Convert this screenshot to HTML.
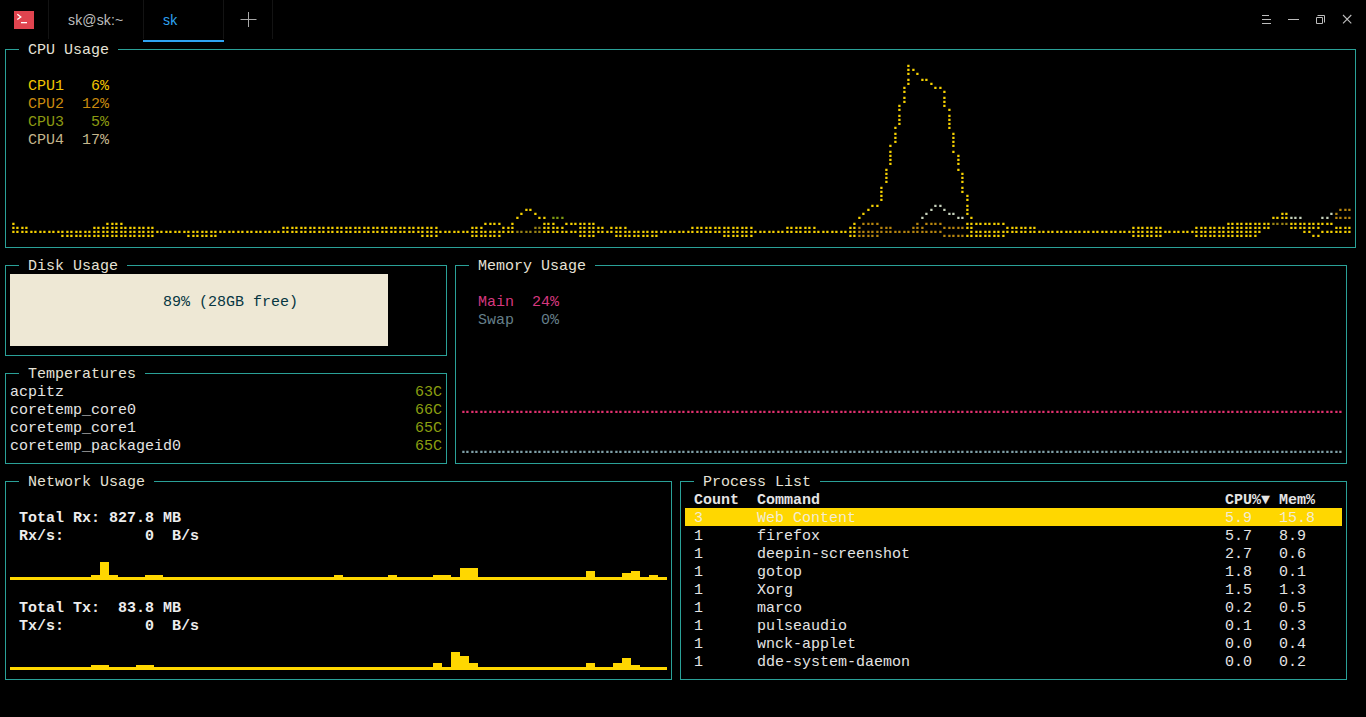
<!DOCTYPE html>
<html><head><meta charset="utf-8"><style>
html,body{margin:0;padding:0;background:#000;}
body{width:1366px;height:717px;overflow:hidden;position:relative;}
.l{position:absolute;background:#2aa198;}
.t{position:absolute;white-space:pre;font-family:"Liberation Mono",monospace;font-size:15px;line-height:18px;height:18px;}
.b{font-weight:bold;}
.s{position:absolute;background:#ffd700;}
.g{position:absolute;left:0;top:0;}
.sep{position:absolute;top:0;width:1px;height:39px;background:#131313;}
.tab{position:absolute;top:10px;font-family:"Liberation Sans",sans-serif;font-size:14px;letter-spacing:0.15px;line-height:20px;white-space:pre;}
</style></head><body>

<div style="position:absolute;left:14px;top:11px;width:20px;height:18px;background:#e0444f"></div>
<svg style="position:absolute;left:0;top:0" width="60" height="40"><path d="M17.3 14.3 L20.8 16.9 L17.3 19.5" stroke="#fff" stroke-width="1.3" fill="none"/><rect x="21" y="22" width="6" height="1.3" fill="#fff"/></svg>
<div class="sep" style="left:48px"></div>
<div class="sep" style="left:143px"></div>
<div class="sep" style="left:223px"></div>
<div class="sep" style="left:272px"></div>
<div class="tab" style="left:68px;color:#bdbdbd">sk@sk:~</div>
<div class="tab" style="left:163px;color:#2ea3f2">sk</div>
<div style="position:absolute;left:143px;top:40px;width:81px;height:2px;background:#2ea3f2"></div>
<svg style="position:absolute;left:0;top:0" width="1366" height="40">
<path d="M240.5 19.5 H256.5 M248.5 12 V27" stroke="#a8a8a8" stroke-width="1" fill="none"/>
<path d="M1262 15.5 H1269 M1262 19.5 H1271 M1262 23.5 H1271" stroke="#bcbcbc" stroke-width="1" fill="none"/>
<path d="M1288 19.5 H1299" stroke="#bcbcbc" stroke-width="1" fill="none"/>
<path d="M1316.5 17.5 H1322.5 V23.5 H1316.5 Z M1317.5 15.5 H1324.5 V22.5" stroke="#bcbcbc" stroke-width="1" fill="none"/>
<path d="M1343 15 L1351.3 23.3 M1351.3 15 L1343 23.3" stroke="#bcbcbc" stroke-width="1.1" fill="none"/>
</svg>

<div class="l" style="left:5px;top:49px;width:1px;height:199px"></div><div class="l" style="left:1355px;top:49px;width:1px;height:199px"></div><div class="l" style="left:5px;top:247px;width:1351px;height:1px"></div><div class="l" style="left:5px;top:49px;width:14px;height:1px"></div><div class="l" style="left:118px;top:49px;width:1238px;height:1px"></div><div class="t" style="left:28px;top:42px;color:#e6e2d6">CPU Usage</div><div class="l" style="left:5px;top:265px;width:1px;height:91px"></div><div class="l" style="left:446px;top:265px;width:1px;height:91px"></div><div class="l" style="left:5px;top:355px;width:442px;height:1px"></div><div class="l" style="left:5px;top:265px;width:14px;height:1px"></div><div class="l" style="left:127px;top:265px;width:320px;height:1px"></div><div class="t" style="left:28px;top:258px;color:#e6e2d6">Disk Usage</div><div class="l" style="left:5px;top:373px;width:1px;height:91px"></div><div class="l" style="left:446px;top:373px;width:1px;height:91px"></div><div class="l" style="left:5px;top:463px;width:442px;height:1px"></div><div class="l" style="left:5px;top:373px;width:14px;height:1px"></div><div class="l" style="left:145px;top:373px;width:302px;height:1px"></div><div class="t" style="left:28px;top:366px;color:#e6e2d6">Temperatures</div><div class="l" style="left:455px;top:265px;width:1px;height:199px"></div><div class="l" style="left:1346px;top:265px;width:1px;height:199px"></div><div class="l" style="left:455px;top:463px;width:892px;height:1px"></div><div class="l" style="left:455px;top:265px;width:14px;height:1px"></div><div class="l" style="left:595px;top:265px;width:752px;height:1px"></div><div class="t" style="left:478px;top:258px;color:#e6e2d6">Memory Usage</div><div class="l" style="left:5px;top:481px;width:1px;height:199px"></div><div class="l" style="left:671px;top:481px;width:1px;height:199px"></div><div class="l" style="left:5px;top:679px;width:667px;height:1px"></div><div class="l" style="left:5px;top:481px;width:14px;height:1px"></div><div class="l" style="left:154px;top:481px;width:518px;height:1px"></div><div class="t" style="left:28px;top:474px;color:#e6e2d6">Network Usage</div><div class="l" style="left:680px;top:481px;width:1px;height:199px"></div><div class="l" style="left:1346px;top:481px;width:1px;height:199px"></div><div class="l" style="left:680px;top:679px;width:667px;height:1px"></div><div class="l" style="left:680px;top:481px;width:14px;height:1px"></div><div class="l" style="left:820px;top:481px;width:527px;height:1px"></div><div class="t" style="left:703px;top:474px;color:#e6e2d6">Process List</div><div class="t" style="left:28px;top:78px;color:#f2c500">CPU1   6%</div><div class="t" style="left:28px;top:96px;color:#c98a0e">CPU2  12%</div><div class="t" style="left:28px;top:114px;color:#8c9a12">CPU3   5%</div><div class="t" style="left:28px;top:132px;color:#c4b68c">CPU4  17%</div><div style="position:absolute;left:10px;top:274px;width:378px;height:72px;background:#eee8d5"></div><div class="t" style="left:163px;top:294px;color:#073642">89% (28GB free)</div><div class="t" style="left:10px;top:384px;color:#e4e4e4">acpitz</div><div class="t" style="left:415px;top:384px;color:#8a9e10">63C</div><div class="t" style="left:10px;top:402px;color:#e4e4e4">coretemp_core0</div><div class="t" style="left:415px;top:402px;color:#8a9e10">66C</div><div class="t" style="left:10px;top:420px;color:#e4e4e4">coretemp_core1</div><div class="t" style="left:415px;top:420px;color:#8a9e10">65C</div><div class="t" style="left:10px;top:438px;color:#e4e4e4">coretemp_packageid0</div><div class="t" style="left:415px;top:438px;color:#8a9e10">65C</div><div class="t" style="left:478px;top:294px;color:#d6387f">Main  24%</div><div class="t" style="left:478px;top:312px;color:#657f89">Swap   0%</div><div class="t b" style="left:19px;top:510px;color:#ededed">Total Rx: 827.8 MB</div><div class="t b" style="left:19px;top:528px;color:#ededed">Rx/s:         0  B/s</div><div class="t b" style="left:19px;top:600px;color:#ededed">Total Tx:  83.8 MB</div><div class="t b" style="left:19px;top:618px;color:#ededed">Tx/s:         0  B/s</div><div class="s" style="left:10px;top:577px;width:9px;height:3px"></div><div class="s" style="left:19px;top:577px;width:9px;height:3px"></div><div class="s" style="left:28px;top:577px;width:9px;height:3px"></div><div class="s" style="left:37px;top:577px;width:9px;height:3px"></div><div class="s" style="left:46px;top:577px;width:9px;height:3px"></div><div class="s" style="left:55px;top:577px;width:9px;height:3px"></div><div class="s" style="left:64px;top:577px;width:9px;height:3px"></div><div class="s" style="left:73px;top:577px;width:9px;height:3px"></div><div class="s" style="left:82px;top:577px;width:9px;height:3px"></div><div class="s" style="left:91px;top:575px;width:9px;height:5px"></div><div class="s" style="left:100px;top:562px;width:9px;height:18px"></div><div class="s" style="left:109px;top:575px;width:9px;height:5px"></div><div class="s" style="left:118px;top:577px;width:9px;height:3px"></div><div class="s" style="left:127px;top:577px;width:9px;height:3px"></div><div class="s" style="left:136px;top:577px;width:9px;height:3px"></div><div class="s" style="left:145px;top:575px;width:9px;height:5px"></div><div class="s" style="left:154px;top:575px;width:9px;height:5px"></div><div class="s" style="left:163px;top:577px;width:9px;height:3px"></div><div class="s" style="left:172px;top:577px;width:9px;height:3px"></div><div class="s" style="left:181px;top:577px;width:9px;height:3px"></div><div class="s" style="left:190px;top:577px;width:9px;height:3px"></div><div class="s" style="left:199px;top:577px;width:9px;height:3px"></div><div class="s" style="left:208px;top:577px;width:9px;height:3px"></div><div class="s" style="left:217px;top:577px;width:9px;height:3px"></div><div class="s" style="left:226px;top:577px;width:9px;height:3px"></div><div class="s" style="left:235px;top:577px;width:9px;height:3px"></div><div class="s" style="left:244px;top:577px;width:9px;height:3px"></div><div class="s" style="left:253px;top:577px;width:9px;height:3px"></div><div class="s" style="left:262px;top:577px;width:9px;height:3px"></div><div class="s" style="left:271px;top:577px;width:9px;height:3px"></div><div class="s" style="left:280px;top:577px;width:9px;height:3px"></div><div class="s" style="left:289px;top:577px;width:9px;height:3px"></div><div class="s" style="left:298px;top:577px;width:9px;height:3px"></div><div class="s" style="left:307px;top:577px;width:9px;height:3px"></div><div class="s" style="left:316px;top:577px;width:9px;height:3px"></div><div class="s" style="left:325px;top:577px;width:9px;height:3px"></div><div class="s" style="left:334px;top:575px;width:9px;height:5px"></div><div class="s" style="left:343px;top:577px;width:9px;height:3px"></div><div class="s" style="left:352px;top:577px;width:9px;height:3px"></div><div class="s" style="left:361px;top:577px;width:9px;height:3px"></div><div class="s" style="left:370px;top:577px;width:9px;height:3px"></div><div class="s" style="left:379px;top:577px;width:9px;height:3px"></div><div class="s" style="left:388px;top:575px;width:9px;height:5px"></div><div class="s" style="left:397px;top:577px;width:9px;height:3px"></div><div class="s" style="left:406px;top:577px;width:9px;height:3px"></div><div class="s" style="left:415px;top:577px;width:9px;height:3px"></div><div class="s" style="left:424px;top:577px;width:9px;height:3px"></div><div class="s" style="left:433px;top:575px;width:9px;height:5px"></div><div class="s" style="left:442px;top:575px;width:9px;height:5px"></div><div class="s" style="left:451px;top:577px;width:9px;height:3px"></div><div class="s" style="left:460px;top:568px;width:9px;height:12px"></div><div class="s" style="left:469px;top:568px;width:9px;height:12px"></div><div class="s" style="left:478px;top:577px;width:9px;height:3px"></div><div class="s" style="left:487px;top:577px;width:9px;height:3px"></div><div class="s" style="left:496px;top:577px;width:9px;height:3px"></div><div class="s" style="left:505px;top:577px;width:9px;height:3px"></div><div class="s" style="left:514px;top:577px;width:9px;height:3px"></div><div class="s" style="left:523px;top:577px;width:9px;height:3px"></div><div class="s" style="left:532px;top:577px;width:9px;height:3px"></div><div class="s" style="left:541px;top:577px;width:9px;height:3px"></div><div class="s" style="left:550px;top:577px;width:9px;height:3px"></div><div class="s" style="left:559px;top:577px;width:9px;height:3px"></div><div class="s" style="left:568px;top:577px;width:9px;height:3px"></div><div class="s" style="left:577px;top:577px;width:9px;height:3px"></div><div class="s" style="left:586px;top:571px;width:9px;height:9px"></div><div class="s" style="left:595px;top:577px;width:9px;height:3px"></div><div class="s" style="left:604px;top:577px;width:9px;height:3px"></div><div class="s" style="left:613px;top:577px;width:9px;height:3px"></div><div class="s" style="left:622px;top:573px;width:9px;height:7px"></div><div class="s" style="left:631px;top:571px;width:9px;height:9px"></div><div class="s" style="left:640px;top:577px;width:9px;height:3px"></div><div class="s" style="left:649px;top:575px;width:9px;height:5px"></div><div class="s" style="left:658px;top:577px;width:9px;height:3px"></div><div class="s" style="left:10px;top:667px;width:9px;height:3px"></div><div class="s" style="left:19px;top:667px;width:9px;height:3px"></div><div class="s" style="left:28px;top:667px;width:9px;height:3px"></div><div class="s" style="left:37px;top:667px;width:9px;height:3px"></div><div class="s" style="left:46px;top:667px;width:9px;height:3px"></div><div class="s" style="left:55px;top:667px;width:9px;height:3px"></div><div class="s" style="left:64px;top:667px;width:9px;height:3px"></div><div class="s" style="left:73px;top:667px;width:9px;height:3px"></div><div class="s" style="left:82px;top:667px;width:9px;height:3px"></div><div class="s" style="left:91px;top:665px;width:9px;height:5px"></div><div class="s" style="left:100px;top:665px;width:9px;height:5px"></div><div class="s" style="left:109px;top:667px;width:9px;height:3px"></div><div class="s" style="left:118px;top:667px;width:9px;height:3px"></div><div class="s" style="left:127px;top:667px;width:9px;height:3px"></div><div class="s" style="left:136px;top:665px;width:9px;height:5px"></div><div class="s" style="left:145px;top:665px;width:9px;height:5px"></div><div class="s" style="left:154px;top:667px;width:9px;height:3px"></div><div class="s" style="left:163px;top:667px;width:9px;height:3px"></div><div class="s" style="left:172px;top:667px;width:9px;height:3px"></div><div class="s" style="left:181px;top:667px;width:9px;height:3px"></div><div class="s" style="left:190px;top:667px;width:9px;height:3px"></div><div class="s" style="left:199px;top:667px;width:9px;height:3px"></div><div class="s" style="left:208px;top:667px;width:9px;height:3px"></div><div class="s" style="left:217px;top:667px;width:9px;height:3px"></div><div class="s" style="left:226px;top:667px;width:9px;height:3px"></div><div class="s" style="left:235px;top:667px;width:9px;height:3px"></div><div class="s" style="left:244px;top:667px;width:9px;height:3px"></div><div class="s" style="left:253px;top:667px;width:9px;height:3px"></div><div class="s" style="left:262px;top:667px;width:9px;height:3px"></div><div class="s" style="left:271px;top:667px;width:9px;height:3px"></div><div class="s" style="left:280px;top:667px;width:9px;height:3px"></div><div class="s" style="left:289px;top:667px;width:9px;height:3px"></div><div class="s" style="left:298px;top:667px;width:9px;height:3px"></div><div class="s" style="left:307px;top:667px;width:9px;height:3px"></div><div class="s" style="left:316px;top:667px;width:9px;height:3px"></div><div class="s" style="left:325px;top:667px;width:9px;height:3px"></div><div class="s" style="left:334px;top:667px;width:9px;height:3px"></div><div class="s" style="left:343px;top:667px;width:9px;height:3px"></div><div class="s" style="left:352px;top:667px;width:9px;height:3px"></div><div class="s" style="left:361px;top:667px;width:9px;height:3px"></div><div class="s" style="left:370px;top:667px;width:9px;height:3px"></div><div class="s" style="left:379px;top:667px;width:9px;height:3px"></div><div class="s" style="left:388px;top:667px;width:9px;height:3px"></div><div class="s" style="left:397px;top:667px;width:9px;height:3px"></div><div class="s" style="left:406px;top:667px;width:9px;height:3px"></div><div class="s" style="left:415px;top:667px;width:9px;height:3px"></div><div class="s" style="left:424px;top:667px;width:9px;height:3px"></div><div class="s" style="left:433px;top:663px;width:9px;height:7px"></div><div class="s" style="left:442px;top:667px;width:9px;height:3px"></div><div class="s" style="left:451px;top:652px;width:9px;height:18px"></div><div class="s" style="left:460px;top:656px;width:9px;height:14px"></div><div class="s" style="left:469px;top:663px;width:9px;height:7px"></div><div class="s" style="left:478px;top:667px;width:9px;height:3px"></div><div class="s" style="left:487px;top:667px;width:9px;height:3px"></div><div class="s" style="left:496px;top:667px;width:9px;height:3px"></div><div class="s" style="left:505px;top:667px;width:9px;height:3px"></div><div class="s" style="left:514px;top:667px;width:9px;height:3px"></div><div class="s" style="left:523px;top:667px;width:9px;height:3px"></div><div class="s" style="left:532px;top:667px;width:9px;height:3px"></div><div class="s" style="left:541px;top:667px;width:9px;height:3px"></div><div class="s" style="left:550px;top:667px;width:9px;height:3px"></div><div class="s" style="left:559px;top:667px;width:9px;height:3px"></div><div class="s" style="left:568px;top:667px;width:9px;height:3px"></div><div class="s" style="left:577px;top:667px;width:9px;height:3px"></div><div class="s" style="left:586px;top:663px;width:9px;height:7px"></div><div class="s" style="left:595px;top:667px;width:9px;height:3px"></div><div class="s" style="left:604px;top:667px;width:9px;height:3px"></div><div class="s" style="left:613px;top:663px;width:9px;height:7px"></div><div class="s" style="left:622px;top:658px;width:9px;height:12px"></div><div class="s" style="left:631px;top:665px;width:9px;height:5px"></div><div class="s" style="left:640px;top:667px;width:9px;height:3px"></div><div class="s" style="left:649px;top:667px;width:9px;height:3px"></div><div class="s" style="left:658px;top:667px;width:9px;height:3px"></div><div style="position:absolute;left:685px;top:508px;width:657px;height:18px;background:#ffd700"></div><div class="t b" style="left:694px;top:492px;color:#e4e4e4">Count</div><div class="t b" style="left:757px;top:492px;color:#e4e4e4">Command</div><div class="t b" style="left:1225px;top:492px;color:#e4e4e4">CPU%▼</div><div class="t b" style="left:1279px;top:492px;color:#e4e4e4">Mem%</div><div class="t" style="left:694px;top:510px;color:#f3ecd2">3</div><div class="t" style="left:757px;top:510px;color:#f3ecd2">Web Content</div><div class="t" style="left:1225px;top:510px;color:#f3ecd2">5.9</div><div class="t" style="left:1279px;top:510px;color:#f3ecd2">15.8</div><div class="t" style="left:694px;top:528px;color:#e4e4e4">1</div><div class="t" style="left:757px;top:528px;color:#e4e4e4">firefox</div><div class="t" style="left:1225px;top:528px;color:#e4e4e4">5.7</div><div class="t" style="left:1279px;top:528px;color:#e4e4e4">8.9</div><div class="t" style="left:694px;top:546px;color:#e4e4e4">1</div><div class="t" style="left:757px;top:546px;color:#e4e4e4">deepin-screenshot</div><div class="t" style="left:1225px;top:546px;color:#e4e4e4">2.7</div><div class="t" style="left:1279px;top:546px;color:#e4e4e4">0.6</div><div class="t" style="left:694px;top:564px;color:#e4e4e4">1</div><div class="t" style="left:757px;top:564px;color:#e4e4e4">gotop</div><div class="t" style="left:1225px;top:564px;color:#e4e4e4">1.8</div><div class="t" style="left:1279px;top:564px;color:#e4e4e4">0.1</div><div class="t" style="left:694px;top:582px;color:#e4e4e4">1</div><div class="t" style="left:757px;top:582px;color:#e4e4e4">Xorg</div><div class="t" style="left:1225px;top:582px;color:#e4e4e4">1.5</div><div class="t" style="left:1279px;top:582px;color:#e4e4e4">1.3</div><div class="t" style="left:694px;top:600px;color:#e4e4e4">1</div><div class="t" style="left:757px;top:600px;color:#e4e4e4">marco</div><div class="t" style="left:1225px;top:600px;color:#e4e4e4">0.2</div><div class="t" style="left:1279px;top:600px;color:#e4e4e4">0.5</div><div class="t" style="left:694px;top:618px;color:#e4e4e4">1</div><div class="t" style="left:757px;top:618px;color:#e4e4e4">pulseaudio</div><div class="t" style="left:1225px;top:618px;color:#e4e4e4">0.1</div><div class="t" style="left:1279px;top:618px;color:#e4e4e4">0.3</div><div class="t" style="left:694px;top:636px;color:#e4e4e4">1</div><div class="t" style="left:757px;top:636px;color:#e4e4e4">wnck-applet</div><div class="t" style="left:1225px;top:636px;color:#e4e4e4">0.0</div><div class="t" style="left:1279px;top:636px;color:#e4e4e4">0.4</div><div class="t" style="left:694px;top:654px;color:#e4e4e4">1</div><div class="t" style="left:757px;top:654px;color:#e4e4e4">dde-system-daemon</div><div class="t" style="left:1225px;top:654px;color:#e4e4e4">0.0</div><div class="t" style="left:1279px;top:654px;color:#e4e4e4">0.2</div><svg class="g" width="1366" height="717" viewBox="0 0 1366 717"><path fill="#f5d000" d="M12.25 222.65h2.3v2.3h-2.3zM12.25 226.75h2.3v2.3h-2.3zM12.25 230.75h2.3v2.3h-2.3zM16.25 226.75h2.3v2.3h-2.3zM16.25 230.75h2.3v2.3h-2.3zM21.25 226.75h2.3v2.3h-2.3zM21.25 230.75h2.3v2.3h-2.3zM25.25 226.75h2.3v2.3h-2.3zM25.25 230.75h2.3v2.3h-2.3zM30.25 230.75h2.3v2.3h-2.3zM34.25 230.75h2.3v2.3h-2.3zM39.25 230.75h2.3v2.3h-2.3zM43.25 230.75h2.3v2.3h-2.3zM48.25 230.75h2.3v2.3h-2.3zM52.25 230.75h2.3v2.3h-2.3zM57.25 230.75h2.3v2.3h-2.3zM61.25 230.75h2.3v2.3h-2.3zM61.25 234.75h2.3v2.3h-2.3zM66.25 230.75h2.3v2.3h-2.3zM66.25 234.75h2.3v2.3h-2.3zM70.25 230.75h2.3v2.3h-2.3zM70.25 234.75h2.3v2.3h-2.3zM75.25 230.75h2.3v2.3h-2.3zM75.25 234.75h2.3v2.3h-2.3zM79.25 230.75h2.3v2.3h-2.3zM79.25 234.75h2.3v2.3h-2.3zM84.25 230.75h2.3v2.3h-2.3zM84.25 234.75h2.3v2.3h-2.3zM88.25 230.75h2.3v2.3h-2.3zM88.25 234.75h2.3v2.3h-2.3zM93.25 226.75h2.3v2.3h-2.3zM93.25 230.75h2.3v2.3h-2.3zM93.25 234.75h2.3v2.3h-2.3zM97.25 226.75h2.3v2.3h-2.3zM97.25 230.75h2.3v2.3h-2.3zM97.25 234.75h2.3v2.3h-2.3zM102.25 226.75h2.3v2.3h-2.3zM102.25 230.75h2.3v2.3h-2.3zM102.25 234.75h2.3v2.3h-2.3zM106.25 222.65h2.3v2.3h-2.3zM106.25 226.75h2.3v2.3h-2.3zM106.25 230.75h2.3v2.3h-2.3zM106.25 234.75h2.3v2.3h-2.3zM111.25 222.65h2.3v2.3h-2.3zM111.25 226.75h2.3v2.3h-2.3zM111.25 230.75h2.3v2.3h-2.3zM111.25 234.75h2.3v2.3h-2.3zM115.25 222.65h2.3v2.3h-2.3zM115.25 226.75h2.3v2.3h-2.3zM115.25 230.75h2.3v2.3h-2.3zM115.25 234.75h2.3v2.3h-2.3zM120.25 222.65h2.3v2.3h-2.3zM120.25 226.75h2.3v2.3h-2.3zM120.25 230.75h2.3v2.3h-2.3zM120.25 234.75h2.3v2.3h-2.3zM124.25 226.75h2.3v2.3h-2.3zM124.25 230.75h2.3v2.3h-2.3zM124.25 234.75h2.3v2.3h-2.3zM129.25 226.75h2.3v2.3h-2.3zM129.25 230.75h2.3v2.3h-2.3zM129.25 234.75h2.3v2.3h-2.3zM133.25 226.75h2.3v2.3h-2.3zM133.25 230.75h2.3v2.3h-2.3zM133.25 234.75h2.3v2.3h-2.3zM138.25 226.75h2.3v2.3h-2.3zM138.25 230.75h2.3v2.3h-2.3zM138.25 234.75h2.3v2.3h-2.3zM142.25 226.75h2.3v2.3h-2.3zM142.25 230.75h2.3v2.3h-2.3zM142.25 234.75h2.3v2.3h-2.3zM147.25 226.75h2.3v2.3h-2.3zM147.25 230.75h2.3v2.3h-2.3zM147.25 234.75h2.3v2.3h-2.3zM151.25 226.75h2.3v2.3h-2.3zM151.25 230.75h2.3v2.3h-2.3zM151.25 234.75h2.3v2.3h-2.3zM156.25 230.75h2.3v2.3h-2.3zM160.25 230.75h2.3v2.3h-2.3zM165.25 230.75h2.3v2.3h-2.3zM169.25 230.75h2.3v2.3h-2.3zM174.25 230.75h2.3v2.3h-2.3zM178.25 230.75h2.3v2.3h-2.3zM183.25 230.75h2.3v2.3h-2.3zM187.25 230.75h2.3v2.3h-2.3zM187.25 234.75h2.3v2.3h-2.3zM192.25 230.75h2.3v2.3h-2.3zM192.25 234.75h2.3v2.3h-2.3zM196.25 230.75h2.3v2.3h-2.3zM196.25 234.75h2.3v2.3h-2.3zM201.25 230.75h2.3v2.3h-2.3zM201.25 234.75h2.3v2.3h-2.3zM205.25 230.75h2.3v2.3h-2.3zM205.25 234.75h2.3v2.3h-2.3zM210.25 230.75h2.3v2.3h-2.3zM210.25 234.75h2.3v2.3h-2.3zM214.25 230.75h2.3v2.3h-2.3zM214.25 234.75h2.3v2.3h-2.3zM219.25 230.75h2.3v2.3h-2.3zM223.25 230.75h2.3v2.3h-2.3zM228.25 230.75h2.3v2.3h-2.3zM232.25 230.75h2.3v2.3h-2.3zM237.25 230.75h2.3v2.3h-2.3zM241.25 230.75h2.3v2.3h-2.3zM246.25 230.75h2.3v2.3h-2.3zM250.25 230.75h2.3v2.3h-2.3zM255.25 230.75h2.3v2.3h-2.3zM259.25 230.75h2.3v2.3h-2.3zM264.25 230.75h2.3v2.3h-2.3zM268.25 230.75h2.3v2.3h-2.3zM273.25 230.75h2.3v2.3h-2.3zM277.25 230.75h2.3v2.3h-2.3zM282.25 226.75h2.3v2.3h-2.3zM282.25 230.75h2.3v2.3h-2.3zM286.25 226.75h2.3v2.3h-2.3zM286.25 230.75h2.3v2.3h-2.3zM291.25 226.75h2.3v2.3h-2.3zM291.25 230.75h2.3v2.3h-2.3zM295.25 226.75h2.3v2.3h-2.3zM295.25 230.75h2.3v2.3h-2.3zM300.25 226.75h2.3v2.3h-2.3zM300.25 230.75h2.3v2.3h-2.3zM304.25 226.75h2.3v2.3h-2.3zM304.25 230.75h2.3v2.3h-2.3zM309.25 226.75h2.3v2.3h-2.3zM309.25 230.75h2.3v2.3h-2.3zM313.25 226.75h2.3v2.3h-2.3zM313.25 230.75h2.3v2.3h-2.3zM318.25 226.75h2.3v2.3h-2.3zM318.25 230.75h2.3v2.3h-2.3zM322.25 226.75h2.3v2.3h-2.3zM322.25 230.75h2.3v2.3h-2.3zM327.25 226.75h2.3v2.3h-2.3zM327.25 230.75h2.3v2.3h-2.3zM331.25 226.75h2.3v2.3h-2.3zM331.25 230.75h2.3v2.3h-2.3zM336.25 226.75h2.3v2.3h-2.3zM336.25 230.75h2.3v2.3h-2.3zM340.25 226.75h2.3v2.3h-2.3zM340.25 230.75h2.3v2.3h-2.3zM345.25 226.75h2.3v2.3h-2.3zM345.25 230.75h2.3v2.3h-2.3zM349.25 226.75h2.3v2.3h-2.3zM349.25 230.75h2.3v2.3h-2.3zM354.25 226.75h2.3v2.3h-2.3zM354.25 230.75h2.3v2.3h-2.3zM358.25 226.75h2.3v2.3h-2.3zM358.25 230.75h2.3v2.3h-2.3zM363.25 226.75h2.3v2.3h-2.3zM363.25 230.75h2.3v2.3h-2.3zM367.25 226.75h2.3v2.3h-2.3zM367.25 230.75h2.3v2.3h-2.3zM372.25 226.75h2.3v2.3h-2.3zM372.25 230.75h2.3v2.3h-2.3zM376.25 226.75h2.3v2.3h-2.3zM376.25 230.75h2.3v2.3h-2.3zM381.25 226.75h2.3v2.3h-2.3zM381.25 230.75h2.3v2.3h-2.3zM385.25 226.75h2.3v2.3h-2.3zM385.25 230.75h2.3v2.3h-2.3zM390.25 226.75h2.3v2.3h-2.3zM390.25 230.75h2.3v2.3h-2.3zM394.25 226.75h2.3v2.3h-2.3zM394.25 230.75h2.3v2.3h-2.3zM399.25 226.75h2.3v2.3h-2.3zM399.25 230.75h2.3v2.3h-2.3zM403.25 226.75h2.3v2.3h-2.3zM403.25 230.75h2.3v2.3h-2.3zM408.25 226.75h2.3v2.3h-2.3zM408.25 230.75h2.3v2.3h-2.3zM412.25 226.75h2.3v2.3h-2.3zM412.25 230.75h2.3v2.3h-2.3zM417.25 226.75h2.3v2.3h-2.3zM417.25 230.75h2.3v2.3h-2.3zM421.25 226.75h2.3v2.3h-2.3zM421.25 230.75h2.3v2.3h-2.3zM421.25 234.75h2.3v2.3h-2.3zM426.25 226.75h2.3v2.3h-2.3zM426.25 230.75h2.3v2.3h-2.3zM426.25 234.75h2.3v2.3h-2.3zM430.25 226.75h2.3v2.3h-2.3zM430.25 230.75h2.3v2.3h-2.3zM430.25 234.75h2.3v2.3h-2.3zM435.25 226.75h2.3v2.3h-2.3zM435.25 230.75h2.3v2.3h-2.3zM435.25 234.75h2.3v2.3h-2.3zM439.25 230.75h2.3v2.3h-2.3zM444.25 230.75h2.3v2.3h-2.3zM448.25 230.75h2.3v2.3h-2.3zM453.25 230.75h2.3v2.3h-2.3zM457.25 230.75h2.3v2.3h-2.3zM462.25 230.75h2.3v2.3h-2.3zM466.25 230.75h2.3v2.3h-2.3zM471.25 226.75h2.3v2.3h-2.3zM471.25 230.75h2.3v2.3h-2.3zM471.25 234.75h2.3v2.3h-2.3zM475.25 226.75h2.3v2.3h-2.3zM475.25 230.75h2.3v2.3h-2.3zM475.25 234.75h2.3v2.3h-2.3zM480.25 226.75h2.3v2.3h-2.3zM480.25 230.75h2.3v2.3h-2.3zM480.25 234.75h2.3v2.3h-2.3zM484.25 222.65h2.3v2.3h-2.3zM484.25 230.75h2.3v2.3h-2.3zM484.25 234.75h2.3v2.3h-2.3zM489.25 222.65h2.3v2.3h-2.3zM489.25 230.75h2.3v2.3h-2.3zM489.25 234.75h2.3v2.3h-2.3zM493.25 222.65h2.3v2.3h-2.3zM493.25 230.75h2.3v2.3h-2.3zM493.25 234.75h2.3v2.3h-2.3zM498.25 222.65h2.3v2.3h-2.3zM498.25 230.75h2.3v2.3h-2.3zM498.25 234.75h2.3v2.3h-2.3zM502.25 226.75h2.3v2.3h-2.3zM502.25 230.75h2.3v2.3h-2.3zM507.25 226.75h2.3v2.3h-2.3zM507.25 230.75h2.3v2.3h-2.3zM511.25 222.65h2.3v2.3h-2.3zM511.25 226.75h2.3v2.3h-2.3zM511.25 230.75h2.3v2.3h-2.3zM516.25 216.75h2.3v2.3h-2.3zM520.25 212.75h2.3v2.3h-2.3zM525.25 208.75h2.3v2.3h-2.3zM529.25 208.75h2.3v2.3h-2.3zM534.25 212.75h2.3v2.3h-2.3zM538.25 216.75h2.3v2.3h-2.3zM543.25 216.75h2.3v2.3h-2.3zM543.25 222.65h2.3v2.3h-2.3zM543.25 226.75h2.3v2.3h-2.3zM543.25 230.75h2.3v2.3h-2.3zM547.25 222.65h2.3v2.3h-2.3zM547.25 226.75h2.3v2.3h-2.3zM547.25 230.75h2.3v2.3h-2.3zM552.25 222.65h2.3v2.3h-2.3zM552.25 226.75h2.3v2.3h-2.3zM552.25 230.75h2.3v2.3h-2.3zM556.25 226.75h2.3v2.3h-2.3zM556.25 230.75h2.3v2.3h-2.3zM561.25 226.75h2.3v2.3h-2.3zM561.25 230.75h2.3v2.3h-2.3zM565.25 222.65h2.3v2.3h-2.3zM565.25 230.75h2.3v2.3h-2.3zM570.25 222.65h2.3v2.3h-2.3zM570.25 230.75h2.3v2.3h-2.3zM574.25 222.65h2.3v2.3h-2.3zM574.25 230.75h2.3v2.3h-2.3zM579.25 222.65h2.3v2.3h-2.3zM579.25 226.75h2.3v2.3h-2.3zM579.25 230.75h2.3v2.3h-2.3zM579.25 234.75h2.3v2.3h-2.3zM583.25 222.65h2.3v2.3h-2.3zM583.25 226.75h2.3v2.3h-2.3zM583.25 230.75h2.3v2.3h-2.3zM583.25 234.75h2.3v2.3h-2.3zM588.25 222.65h2.3v2.3h-2.3zM588.25 226.75h2.3v2.3h-2.3zM588.25 230.75h2.3v2.3h-2.3zM588.25 234.75h2.3v2.3h-2.3zM592.25 222.65h2.3v2.3h-2.3zM592.25 226.75h2.3v2.3h-2.3zM592.25 230.75h2.3v2.3h-2.3zM592.25 234.75h2.3v2.3h-2.3zM597.25 226.75h2.3v2.3h-2.3zM597.25 230.75h2.3v2.3h-2.3zM601.25 226.75h2.3v2.3h-2.3zM601.25 230.75h2.3v2.3h-2.3zM606.25 230.75h2.3v2.3h-2.3zM610.25 226.75h2.3v2.3h-2.3zM610.25 230.75h2.3v2.3h-2.3zM615.25 226.75h2.3v2.3h-2.3zM615.25 230.75h2.3v2.3h-2.3zM615.25 234.75h2.3v2.3h-2.3zM619.25 226.75h2.3v2.3h-2.3zM619.25 230.75h2.3v2.3h-2.3zM619.25 234.75h2.3v2.3h-2.3zM624.25 226.75h2.3v2.3h-2.3zM624.25 230.75h2.3v2.3h-2.3zM624.25 234.75h2.3v2.3h-2.3zM628.25 230.75h2.3v2.3h-2.3zM628.25 234.75h2.3v2.3h-2.3zM633.25 230.75h2.3v2.3h-2.3zM633.25 234.75h2.3v2.3h-2.3zM637.25 230.75h2.3v2.3h-2.3zM637.25 234.75h2.3v2.3h-2.3zM642.25 230.75h2.3v2.3h-2.3zM642.25 234.75h2.3v2.3h-2.3zM646.25 230.75h2.3v2.3h-2.3zM646.25 234.75h2.3v2.3h-2.3zM651.25 230.75h2.3v2.3h-2.3zM651.25 234.75h2.3v2.3h-2.3zM655.25 230.75h2.3v2.3h-2.3zM655.25 234.75h2.3v2.3h-2.3zM660.25 230.75h2.3v2.3h-2.3zM664.25 230.75h2.3v2.3h-2.3zM669.25 230.75h2.3v2.3h-2.3zM673.25 230.75h2.3v2.3h-2.3zM678.25 230.75h2.3v2.3h-2.3zM682.25 230.75h2.3v2.3h-2.3zM687.25 230.75h2.3v2.3h-2.3zM691.25 226.75h2.3v2.3h-2.3zM691.25 230.75h2.3v2.3h-2.3zM696.25 226.75h2.3v2.3h-2.3zM696.25 230.75h2.3v2.3h-2.3zM700.25 226.75h2.3v2.3h-2.3zM700.25 230.75h2.3v2.3h-2.3zM705.25 226.75h2.3v2.3h-2.3zM705.25 230.75h2.3v2.3h-2.3zM709.25 226.75h2.3v2.3h-2.3zM709.25 230.75h2.3v2.3h-2.3zM714.25 226.75h2.3v2.3h-2.3zM714.25 230.75h2.3v2.3h-2.3zM718.25 226.75h2.3v2.3h-2.3zM718.25 230.75h2.3v2.3h-2.3zM723.25 226.75h2.3v2.3h-2.3zM723.25 230.75h2.3v2.3h-2.3zM723.25 234.75h2.3v2.3h-2.3zM727.25 226.75h2.3v2.3h-2.3zM727.25 230.75h2.3v2.3h-2.3zM727.25 234.75h2.3v2.3h-2.3zM732.25 226.75h2.3v2.3h-2.3zM732.25 230.75h2.3v2.3h-2.3zM732.25 234.75h2.3v2.3h-2.3zM736.25 226.75h2.3v2.3h-2.3zM736.25 230.75h2.3v2.3h-2.3zM736.25 234.75h2.3v2.3h-2.3zM741.25 226.75h2.3v2.3h-2.3zM741.25 230.75h2.3v2.3h-2.3zM741.25 234.75h2.3v2.3h-2.3zM745.25 226.75h2.3v2.3h-2.3zM745.25 230.75h2.3v2.3h-2.3zM745.25 234.75h2.3v2.3h-2.3zM750.25 226.75h2.3v2.3h-2.3zM750.25 230.75h2.3v2.3h-2.3zM750.25 234.75h2.3v2.3h-2.3zM754.25 230.75h2.3v2.3h-2.3zM759.25 230.75h2.3v2.3h-2.3zM763.25 230.75h2.3v2.3h-2.3zM768.25 230.75h2.3v2.3h-2.3zM772.25 230.75h2.3v2.3h-2.3zM777.25 230.75h2.3v2.3h-2.3zM781.25 230.75h2.3v2.3h-2.3zM786.25 226.75h2.3v2.3h-2.3zM786.25 230.75h2.3v2.3h-2.3zM790.25 226.75h2.3v2.3h-2.3zM790.25 230.75h2.3v2.3h-2.3zM795.25 226.75h2.3v2.3h-2.3zM795.25 230.75h2.3v2.3h-2.3zM799.25 226.75h2.3v2.3h-2.3zM799.25 230.75h2.3v2.3h-2.3zM804.25 226.75h2.3v2.3h-2.3zM804.25 230.75h2.3v2.3h-2.3zM808.25 226.75h2.3v2.3h-2.3zM808.25 230.75h2.3v2.3h-2.3zM813.25 226.75h2.3v2.3h-2.3zM813.25 230.75h2.3v2.3h-2.3zM817.25 230.75h2.3v2.3h-2.3zM822.25 230.75h2.3v2.3h-2.3zM826.25 230.75h2.3v2.3h-2.3zM831.25 230.75h2.3v2.3h-2.3zM835.25 230.75h2.3v2.3h-2.3zM840.25 230.75h2.3v2.3h-2.3zM844.25 230.75h2.3v2.3h-2.3zM849.25 226.75h2.3v2.3h-2.3zM849.25 230.75h2.3v2.3h-2.3zM849.25 234.75h2.3v2.3h-2.3zM853.25 222.65h2.3v2.3h-2.3zM853.25 226.75h2.3v2.3h-2.3zM853.25 230.75h2.3v2.3h-2.3zM853.25 234.75h2.3v2.3h-2.3zM858.25 216.75h2.3v2.3h-2.3zM862.25 212.75h2.3v2.3h-2.3zM867.25 208.75h2.3v2.3h-2.3zM871.25 204.65h2.3v2.3h-2.3zM876.25 204.65h2.3v2.3h-2.3zM880.25 186.65h2.3v2.3h-2.3zM880.25 190.75h2.3v2.3h-2.3zM880.25 194.75h2.3v2.3h-2.3zM880.25 198.75h2.3v2.3h-2.3zM885.25 168.65h2.3v2.3h-2.3zM885.25 172.75h2.3v2.3h-2.3zM885.25 176.75h2.3v2.3h-2.3zM885.25 180.75h2.3v2.3h-2.3zM889.25 144.75h2.3v2.3h-2.3zM889.25 150.65h2.3v2.3h-2.3zM889.25 154.75h2.3v2.3h-2.3zM889.25 158.75h2.3v2.3h-2.3zM889.25 162.75h2.3v2.3h-2.3zM894.25 126.75h2.3v2.3h-2.3zM894.25 132.65h2.3v2.3h-2.3zM894.25 136.75h2.3v2.3h-2.3zM894.25 140.75h2.3v2.3h-2.3zM898.25 104.75h2.3v2.3h-2.3zM898.25 108.75h2.3v2.3h-2.3zM898.25 114.65h2.3v2.3h-2.3zM898.25 118.75h2.3v2.3h-2.3zM898.25 122.75h2.3v2.3h-2.3zM903.25 86.75h2.3v2.3h-2.3zM903.25 90.75h2.3v2.3h-2.3zM903.25 96.65h2.3v2.3h-2.3zM903.25 100.75h2.3v2.3h-2.3zM907.25 64.75h2.3v2.3h-2.3zM907.25 68.75h2.3v2.3h-2.3zM907.25 72.75h2.3v2.3h-2.3zM907.25 78.65h2.3v2.3h-2.3zM907.25 82.75h2.3v2.3h-2.3zM912.25 68.75h2.3v2.3h-2.3zM916.25 72.75h2.3v2.3h-2.3zM921.25 78.65h2.3v2.3h-2.3zM925.25 78.65h2.3v2.3h-2.3zM930.25 82.75h2.3v2.3h-2.3zM934.25 86.75h2.3v2.3h-2.3zM939.25 86.75h2.3v2.3h-2.3zM943.25 90.75h2.3v2.3h-2.3zM943.25 96.65h2.3v2.3h-2.3zM943.25 100.75h2.3v2.3h-2.3zM943.25 104.75h2.3v2.3h-2.3zM948.25 108.75h2.3v2.3h-2.3zM948.25 114.65h2.3v2.3h-2.3zM948.25 118.75h2.3v2.3h-2.3zM948.25 122.75h2.3v2.3h-2.3zM948.25 126.75h2.3v2.3h-2.3zM952.25 132.65h2.3v2.3h-2.3zM952.25 136.75h2.3v2.3h-2.3zM952.25 140.75h2.3v2.3h-2.3zM952.25 144.75h2.3v2.3h-2.3zM952.25 150.65h2.3v2.3h-2.3zM957.25 154.75h2.3v2.3h-2.3zM957.25 158.75h2.3v2.3h-2.3zM957.25 162.75h2.3v2.3h-2.3zM957.25 168.65h2.3v2.3h-2.3zM961.25 172.75h2.3v2.3h-2.3zM961.25 176.75h2.3v2.3h-2.3zM961.25 180.75h2.3v2.3h-2.3zM961.25 186.65h2.3v2.3h-2.3zM961.25 190.75h2.3v2.3h-2.3zM966.25 194.75h2.3v2.3h-2.3zM966.25 198.75h2.3v2.3h-2.3zM966.25 204.65h2.3v2.3h-2.3zM966.25 208.75h2.3v2.3h-2.3zM966.25 212.75h2.3v2.3h-2.3zM966.25 222.65h2.3v2.3h-2.3zM966.25 226.75h2.3v2.3h-2.3zM966.25 234.75h2.3v2.3h-2.3zM970.25 216.75h2.3v2.3h-2.3zM970.25 222.65h2.3v2.3h-2.3zM970.25 226.75h2.3v2.3h-2.3zM970.25 230.75h2.3v2.3h-2.3zM970.25 234.75h2.3v2.3h-2.3zM975.25 222.65h2.3v2.3h-2.3zM975.25 230.75h2.3v2.3h-2.3zM975.25 234.75h2.3v2.3h-2.3zM979.25 222.65h2.3v2.3h-2.3zM979.25 230.75h2.3v2.3h-2.3zM979.25 234.75h2.3v2.3h-2.3zM984.25 222.65h2.3v2.3h-2.3zM984.25 230.75h2.3v2.3h-2.3zM984.25 234.75h2.3v2.3h-2.3zM988.25 222.65h2.3v2.3h-2.3zM988.25 230.75h2.3v2.3h-2.3zM988.25 234.75h2.3v2.3h-2.3zM993.25 222.65h2.3v2.3h-2.3zM993.25 230.75h2.3v2.3h-2.3zM993.25 234.75h2.3v2.3h-2.3zM997.25 222.65h2.3v2.3h-2.3zM997.25 230.75h2.3v2.3h-2.3zM997.25 234.75h2.3v2.3h-2.3zM1002.25 222.65h2.3v2.3h-2.3zM1002.25 230.75h2.3v2.3h-2.3zM1002.25 234.75h2.3v2.3h-2.3zM1006.25 226.75h2.3v2.3h-2.3zM1006.25 230.75h2.3v2.3h-2.3zM1011.25 226.75h2.3v2.3h-2.3zM1011.25 230.75h2.3v2.3h-2.3zM1015.25 226.75h2.3v2.3h-2.3zM1015.25 230.75h2.3v2.3h-2.3zM1020.25 226.75h2.3v2.3h-2.3zM1020.25 230.75h2.3v2.3h-2.3zM1024.25 226.75h2.3v2.3h-2.3zM1024.25 230.75h2.3v2.3h-2.3zM1029.25 226.75h2.3v2.3h-2.3zM1029.25 230.75h2.3v2.3h-2.3zM1033.25 226.75h2.3v2.3h-2.3zM1033.25 230.75h2.3v2.3h-2.3zM1038.25 230.75h2.3v2.3h-2.3zM1042.25 230.75h2.3v2.3h-2.3zM1047.25 230.75h2.3v2.3h-2.3zM1051.25 230.75h2.3v2.3h-2.3zM1056.25 230.75h2.3v2.3h-2.3zM1060.25 230.75h2.3v2.3h-2.3zM1065.25 230.75h2.3v2.3h-2.3zM1069.25 230.75h2.3v2.3h-2.3zM1074.25 230.75h2.3v2.3h-2.3zM1078.25 230.75h2.3v2.3h-2.3zM1083.25 230.75h2.3v2.3h-2.3zM1087.25 230.75h2.3v2.3h-2.3zM1092.25 230.75h2.3v2.3h-2.3zM1096.25 230.75h2.3v2.3h-2.3zM1101.25 230.75h2.3v2.3h-2.3zM1105.25 230.75h2.3v2.3h-2.3zM1110.25 230.75h2.3v2.3h-2.3zM1114.25 230.75h2.3v2.3h-2.3zM1119.25 230.75h2.3v2.3h-2.3zM1123.25 230.75h2.3v2.3h-2.3zM1128.25 230.75h2.3v2.3h-2.3zM1132.25 226.75h2.3v2.3h-2.3zM1132.25 230.75h2.3v2.3h-2.3zM1132.25 234.75h2.3v2.3h-2.3zM1137.25 226.75h2.3v2.3h-2.3zM1137.25 230.75h2.3v2.3h-2.3zM1137.25 234.75h2.3v2.3h-2.3zM1141.25 226.75h2.3v2.3h-2.3zM1141.25 230.75h2.3v2.3h-2.3zM1141.25 234.75h2.3v2.3h-2.3zM1146.25 226.75h2.3v2.3h-2.3zM1146.25 230.75h2.3v2.3h-2.3zM1146.25 234.75h2.3v2.3h-2.3zM1150.25 226.75h2.3v2.3h-2.3zM1150.25 230.75h2.3v2.3h-2.3zM1150.25 234.75h2.3v2.3h-2.3zM1155.25 226.75h2.3v2.3h-2.3zM1155.25 230.75h2.3v2.3h-2.3zM1155.25 234.75h2.3v2.3h-2.3zM1159.25 226.75h2.3v2.3h-2.3zM1159.25 230.75h2.3v2.3h-2.3zM1159.25 234.75h2.3v2.3h-2.3zM1164.25 230.75h2.3v2.3h-2.3zM1168.25 230.75h2.3v2.3h-2.3zM1173.25 230.75h2.3v2.3h-2.3zM1177.25 230.75h2.3v2.3h-2.3zM1182.25 230.75h2.3v2.3h-2.3zM1186.25 230.75h2.3v2.3h-2.3zM1191.25 230.75h2.3v2.3h-2.3zM1195.25 226.75h2.3v2.3h-2.3zM1195.25 230.75h2.3v2.3h-2.3zM1195.25 234.75h2.3v2.3h-2.3zM1200.25 226.75h2.3v2.3h-2.3zM1200.25 230.75h2.3v2.3h-2.3zM1200.25 234.75h2.3v2.3h-2.3zM1204.25 226.75h2.3v2.3h-2.3zM1204.25 230.75h2.3v2.3h-2.3zM1204.25 234.75h2.3v2.3h-2.3zM1209.25 226.75h2.3v2.3h-2.3zM1209.25 230.75h2.3v2.3h-2.3zM1209.25 234.75h2.3v2.3h-2.3zM1213.25 226.75h2.3v2.3h-2.3zM1213.25 230.75h2.3v2.3h-2.3zM1213.25 234.75h2.3v2.3h-2.3zM1218.25 226.75h2.3v2.3h-2.3zM1218.25 230.75h2.3v2.3h-2.3zM1218.25 234.75h2.3v2.3h-2.3zM1222.25 226.75h2.3v2.3h-2.3zM1222.25 230.75h2.3v2.3h-2.3zM1222.25 234.75h2.3v2.3h-2.3zM1227.25 222.65h2.3v2.3h-2.3zM1227.25 226.75h2.3v2.3h-2.3zM1227.25 230.75h2.3v2.3h-2.3zM1227.25 234.75h2.3v2.3h-2.3zM1231.25 222.65h2.3v2.3h-2.3zM1231.25 226.75h2.3v2.3h-2.3zM1231.25 230.75h2.3v2.3h-2.3zM1231.25 234.75h2.3v2.3h-2.3zM1236.25 222.65h2.3v2.3h-2.3zM1236.25 226.75h2.3v2.3h-2.3zM1236.25 230.75h2.3v2.3h-2.3zM1236.25 234.75h2.3v2.3h-2.3zM1240.25 222.65h2.3v2.3h-2.3zM1240.25 226.75h2.3v2.3h-2.3zM1240.25 230.75h2.3v2.3h-2.3zM1240.25 234.75h2.3v2.3h-2.3zM1245.25 222.65h2.3v2.3h-2.3zM1245.25 226.75h2.3v2.3h-2.3zM1245.25 230.75h2.3v2.3h-2.3zM1245.25 234.75h2.3v2.3h-2.3zM1249.25 222.65h2.3v2.3h-2.3zM1249.25 226.75h2.3v2.3h-2.3zM1249.25 230.75h2.3v2.3h-2.3zM1249.25 234.75h2.3v2.3h-2.3zM1254.25 222.65h2.3v2.3h-2.3zM1254.25 226.75h2.3v2.3h-2.3zM1254.25 230.75h2.3v2.3h-2.3zM1254.25 234.75h2.3v2.3h-2.3zM1258.25 222.65h2.3v2.3h-2.3zM1258.25 226.75h2.3v2.3h-2.3zM1258.25 230.75h2.3v2.3h-2.3zM1263.25 222.65h2.3v2.3h-2.3zM1263.25 226.75h2.3v2.3h-2.3zM1267.25 222.65h2.3v2.3h-2.3zM1267.25 226.75h2.3v2.3h-2.3zM1272.25 216.75h2.3v2.3h-2.3zM1276.25 216.75h2.3v2.3h-2.3zM1281.25 212.75h2.3v2.3h-2.3zM1281.25 216.75h2.3v2.3h-2.3zM1285.25 212.75h2.3v2.3h-2.3zM1285.25 216.75h2.3v2.3h-2.3zM1290.25 222.65h2.3v2.3h-2.3zM1290.25 226.75h2.3v2.3h-2.3zM1294.25 222.65h2.3v2.3h-2.3zM1294.25 226.75h2.3v2.3h-2.3zM1299.25 222.65h2.3v2.3h-2.3zM1299.25 226.75h2.3v2.3h-2.3zM1303.25 222.65h2.3v2.3h-2.3zM1303.25 226.75h2.3v2.3h-2.3zM1303.25 230.75h2.3v2.3h-2.3zM1308.25 222.65h2.3v2.3h-2.3zM1308.25 226.75h2.3v2.3h-2.3zM1308.25 230.75h2.3v2.3h-2.3zM1312.25 222.65h2.3v2.3h-2.3zM1312.25 226.75h2.3v2.3h-2.3zM1312.25 234.75h2.3v2.3h-2.3zM1317.25 222.65h2.3v2.3h-2.3zM1317.25 226.75h2.3v2.3h-2.3zM1317.25 234.75h2.3v2.3h-2.3zM1321.25 222.65h2.3v2.3h-2.3zM1321.25 230.75h2.3v2.3h-2.3zM1326.25 222.65h2.3v2.3h-2.3zM1326.25 230.75h2.3v2.3h-2.3zM1330.25 222.65h2.3v2.3h-2.3zM1330.25 230.75h2.3v2.3h-2.3zM1335.25 226.75h2.3v2.3h-2.3zM1335.25 230.75h2.3v2.3h-2.3zM1339.25 226.75h2.3v2.3h-2.3zM1339.25 230.75h2.3v2.3h-2.3zM1344.25 226.75h2.3v2.3h-2.3zM1344.25 230.75h2.3v2.3h-2.3zM1348.25 226.75h2.3v2.3h-2.3zM1348.25 230.75h2.3v2.3h-2.3z"/><path fill="#9a8414" d="M516.25 230.75h2.3v2.3h-2.3zM520.25 230.75h2.3v2.3h-2.3zM525.25 230.75h2.3v2.3h-2.3zM529.25 230.75h2.3v2.3h-2.3zM534.25 226.75h2.3v2.3h-2.3zM534.25 230.75h2.3v2.3h-2.3zM538.25 226.75h2.3v2.3h-2.3zM538.25 230.75h2.3v2.3h-2.3zM1272.25 222.65h2.3v2.3h-2.3zM1276.25 222.65h2.3v2.3h-2.3zM1281.25 222.65h2.3v2.3h-2.3zM1285.25 222.65h2.3v2.3h-2.3z"/><path fill="#7f9a12" d="M552.25 216.75h2.3v2.3h-2.3zM556.25 216.75h2.3v2.3h-2.3zM561.25 216.75h2.3v2.3h-2.3z"/><path fill="#b8860e" d="M858.25 226.75h2.3v2.3h-2.3zM858.25 230.75h2.3v2.3h-2.3zM858.25 234.75h2.3v2.3h-2.3zM862.25 222.65h2.3v2.3h-2.3zM862.25 230.75h2.3v2.3h-2.3zM862.25 234.75h2.3v2.3h-2.3zM867.25 222.65h2.3v2.3h-2.3zM867.25 230.75h2.3v2.3h-2.3zM867.25 234.75h2.3v2.3h-2.3zM871.25 222.65h2.3v2.3h-2.3zM871.25 230.75h2.3v2.3h-2.3zM871.25 234.75h2.3v2.3h-2.3zM876.25 222.65h2.3v2.3h-2.3zM876.25 230.75h2.3v2.3h-2.3zM876.25 234.75h2.3v2.3h-2.3zM880.25 226.75h2.3v2.3h-2.3zM880.25 230.75h2.3v2.3h-2.3zM885.25 226.75h2.3v2.3h-2.3zM885.25 230.75h2.3v2.3h-2.3zM889.25 226.75h2.3v2.3h-2.3zM889.25 230.75h2.3v2.3h-2.3zM894.25 230.75h2.3v2.3h-2.3zM898.25 230.75h2.3v2.3h-2.3zM903.25 230.75h2.3v2.3h-2.3zM907.25 230.75h2.3v2.3h-2.3zM912.25 226.75h2.3v2.3h-2.3zM912.25 230.75h2.3v2.3h-2.3zM916.25 222.65h2.3v2.3h-2.3zM916.25 226.75h2.3v2.3h-2.3zM916.25 230.75h2.3v2.3h-2.3zM921.25 226.75h2.3v2.3h-2.3zM921.25 230.75h2.3v2.3h-2.3zM925.25 222.65h2.3v2.3h-2.3zM925.25 230.75h2.3v2.3h-2.3zM930.25 222.65h2.3v2.3h-2.3zM930.25 230.75h2.3v2.3h-2.3zM934.25 222.65h2.3v2.3h-2.3zM934.25 230.75h2.3v2.3h-2.3zM939.25 222.65h2.3v2.3h-2.3zM939.25 230.75h2.3v2.3h-2.3zM943.25 226.75h2.3v2.3h-2.3zM943.25 234.75h2.3v2.3h-2.3zM948.25 226.75h2.3v2.3h-2.3zM948.25 234.75h2.3v2.3h-2.3zM952.25 226.75h2.3v2.3h-2.3zM952.25 234.75h2.3v2.3h-2.3zM957.25 226.75h2.3v2.3h-2.3zM957.25 234.75h2.3v2.3h-2.3zM961.25 226.75h2.3v2.3h-2.3zM961.25 234.75h2.3v2.3h-2.3zM1335.25 212.75h2.3v2.3h-2.3zM1335.25 216.75h2.3v2.3h-2.3zM1339.25 208.75h2.3v2.3h-2.3zM1339.25 216.75h2.3v2.3h-2.3zM1344.25 208.75h2.3v2.3h-2.3zM1344.25 216.75h2.3v2.3h-2.3zM1348.25 208.75h2.3v2.3h-2.3zM1348.25 216.75h2.3v2.3h-2.3z"/><path fill="#c6d2bc" d="M921.25 216.75h2.3v2.3h-2.3zM925.25 212.75h2.3v2.3h-2.3zM930.25 208.75h2.3v2.3h-2.3zM934.25 204.65h2.3v2.3h-2.3zM939.25 204.65h2.3v2.3h-2.3zM943.25 208.75h2.3v2.3h-2.3zM948.25 212.75h2.3v2.3h-2.3zM952.25 212.75h2.3v2.3h-2.3zM957.25 216.75h2.3v2.3h-2.3zM961.25 216.75h2.3v2.3h-2.3zM1290.25 216.75h2.3v2.3h-2.3zM1294.25 216.75h2.3v2.3h-2.3zM1299.25 216.75h2.3v2.3h-2.3zM1321.25 216.75h2.3v2.3h-2.3zM1326.25 216.75h2.3v2.3h-2.3zM1330.25 212.75h2.3v2.3h-2.3z"/><path fill="#e0306e" d="M462.25 410.75h2.3v2.3h-2.3zM466.25 410.75h2.3v2.3h-2.3zM471.25 410.75h2.3v2.3h-2.3zM475.25 410.75h2.3v2.3h-2.3zM480.25 410.75h2.3v2.3h-2.3zM484.25 410.75h2.3v2.3h-2.3zM489.25 410.75h2.3v2.3h-2.3zM493.25 410.75h2.3v2.3h-2.3zM498.25 410.75h2.3v2.3h-2.3zM502.25 410.75h2.3v2.3h-2.3zM507.25 410.75h2.3v2.3h-2.3zM511.25 410.75h2.3v2.3h-2.3zM516.25 410.75h2.3v2.3h-2.3zM520.25 410.75h2.3v2.3h-2.3zM525.25 410.75h2.3v2.3h-2.3zM529.25 410.75h2.3v2.3h-2.3zM534.25 410.75h2.3v2.3h-2.3zM538.25 410.75h2.3v2.3h-2.3zM543.25 410.75h2.3v2.3h-2.3zM547.25 410.75h2.3v2.3h-2.3zM552.25 410.75h2.3v2.3h-2.3zM556.25 410.75h2.3v2.3h-2.3zM561.25 410.75h2.3v2.3h-2.3zM565.25 410.75h2.3v2.3h-2.3zM570.25 410.75h2.3v2.3h-2.3zM574.25 410.75h2.3v2.3h-2.3zM579.25 410.75h2.3v2.3h-2.3zM583.25 410.75h2.3v2.3h-2.3zM588.25 410.75h2.3v2.3h-2.3zM592.25 410.75h2.3v2.3h-2.3zM597.25 410.75h2.3v2.3h-2.3zM601.25 410.75h2.3v2.3h-2.3zM606.25 410.75h2.3v2.3h-2.3zM610.25 410.75h2.3v2.3h-2.3zM615.25 410.75h2.3v2.3h-2.3zM619.25 410.75h2.3v2.3h-2.3zM624.25 410.75h2.3v2.3h-2.3zM628.25 410.75h2.3v2.3h-2.3zM633.25 410.75h2.3v2.3h-2.3zM637.25 410.75h2.3v2.3h-2.3zM642.25 410.75h2.3v2.3h-2.3zM646.25 410.75h2.3v2.3h-2.3zM651.25 410.75h2.3v2.3h-2.3zM655.25 410.75h2.3v2.3h-2.3zM660.25 410.75h2.3v2.3h-2.3zM664.25 410.75h2.3v2.3h-2.3zM669.25 410.75h2.3v2.3h-2.3zM673.25 410.75h2.3v2.3h-2.3zM678.25 410.75h2.3v2.3h-2.3zM682.25 410.75h2.3v2.3h-2.3zM687.25 410.75h2.3v2.3h-2.3zM691.25 410.75h2.3v2.3h-2.3zM696.25 410.75h2.3v2.3h-2.3zM700.25 410.75h2.3v2.3h-2.3zM705.25 410.75h2.3v2.3h-2.3zM709.25 410.75h2.3v2.3h-2.3zM714.25 410.75h2.3v2.3h-2.3zM718.25 410.75h2.3v2.3h-2.3zM723.25 410.75h2.3v2.3h-2.3zM727.25 410.75h2.3v2.3h-2.3zM732.25 410.75h2.3v2.3h-2.3zM736.25 410.75h2.3v2.3h-2.3zM741.25 410.75h2.3v2.3h-2.3zM745.25 410.75h2.3v2.3h-2.3zM750.25 410.75h2.3v2.3h-2.3zM754.25 410.75h2.3v2.3h-2.3zM759.25 410.75h2.3v2.3h-2.3zM763.25 410.75h2.3v2.3h-2.3zM768.25 410.75h2.3v2.3h-2.3zM772.25 410.75h2.3v2.3h-2.3zM777.25 410.75h2.3v2.3h-2.3zM781.25 410.75h2.3v2.3h-2.3zM786.25 410.75h2.3v2.3h-2.3zM790.25 410.75h2.3v2.3h-2.3zM795.25 410.75h2.3v2.3h-2.3zM799.25 410.75h2.3v2.3h-2.3zM804.25 410.75h2.3v2.3h-2.3zM808.25 410.75h2.3v2.3h-2.3zM813.25 410.75h2.3v2.3h-2.3zM817.25 410.75h2.3v2.3h-2.3zM822.25 410.75h2.3v2.3h-2.3zM826.25 410.75h2.3v2.3h-2.3zM831.25 410.75h2.3v2.3h-2.3zM835.25 410.75h2.3v2.3h-2.3zM840.25 410.75h2.3v2.3h-2.3zM844.25 410.75h2.3v2.3h-2.3zM849.25 410.75h2.3v2.3h-2.3zM853.25 410.75h2.3v2.3h-2.3zM858.25 410.75h2.3v2.3h-2.3zM862.25 410.75h2.3v2.3h-2.3zM867.25 410.75h2.3v2.3h-2.3zM871.25 410.75h2.3v2.3h-2.3zM876.25 410.75h2.3v2.3h-2.3zM880.25 410.75h2.3v2.3h-2.3zM885.25 410.75h2.3v2.3h-2.3zM889.25 410.75h2.3v2.3h-2.3zM894.25 410.75h2.3v2.3h-2.3zM898.25 410.75h2.3v2.3h-2.3zM903.25 410.75h2.3v2.3h-2.3zM907.25 410.75h2.3v2.3h-2.3zM912.25 410.75h2.3v2.3h-2.3zM916.25 410.75h2.3v2.3h-2.3zM921.25 410.75h2.3v2.3h-2.3zM925.25 410.75h2.3v2.3h-2.3zM930.25 410.75h2.3v2.3h-2.3zM934.25 410.75h2.3v2.3h-2.3zM939.25 410.75h2.3v2.3h-2.3zM943.25 410.75h2.3v2.3h-2.3zM948.25 410.75h2.3v2.3h-2.3zM952.25 410.75h2.3v2.3h-2.3zM957.25 410.75h2.3v2.3h-2.3zM961.25 410.75h2.3v2.3h-2.3zM966.25 410.75h2.3v2.3h-2.3zM970.25 410.75h2.3v2.3h-2.3zM975.25 410.75h2.3v2.3h-2.3zM979.25 410.75h2.3v2.3h-2.3zM984.25 410.75h2.3v2.3h-2.3zM988.25 410.75h2.3v2.3h-2.3zM993.25 410.75h2.3v2.3h-2.3zM997.25 410.75h2.3v2.3h-2.3zM1002.25 410.75h2.3v2.3h-2.3zM1006.25 410.75h2.3v2.3h-2.3zM1011.25 410.75h2.3v2.3h-2.3zM1015.25 410.75h2.3v2.3h-2.3zM1020.25 410.75h2.3v2.3h-2.3zM1024.25 410.75h2.3v2.3h-2.3zM1029.25 410.75h2.3v2.3h-2.3zM1033.25 410.75h2.3v2.3h-2.3zM1038.25 410.75h2.3v2.3h-2.3zM1042.25 410.75h2.3v2.3h-2.3zM1047.25 410.75h2.3v2.3h-2.3zM1051.25 410.75h2.3v2.3h-2.3zM1056.25 410.75h2.3v2.3h-2.3zM1060.25 410.75h2.3v2.3h-2.3zM1065.25 410.75h2.3v2.3h-2.3zM1069.25 410.75h2.3v2.3h-2.3zM1074.25 410.75h2.3v2.3h-2.3zM1078.25 410.75h2.3v2.3h-2.3zM1083.25 410.75h2.3v2.3h-2.3zM1087.25 410.75h2.3v2.3h-2.3zM1092.25 410.75h2.3v2.3h-2.3zM1096.25 410.75h2.3v2.3h-2.3zM1101.25 410.75h2.3v2.3h-2.3zM1105.25 410.75h2.3v2.3h-2.3zM1110.25 410.75h2.3v2.3h-2.3zM1114.25 410.75h2.3v2.3h-2.3zM1119.25 410.75h2.3v2.3h-2.3zM1123.25 410.75h2.3v2.3h-2.3zM1128.25 410.75h2.3v2.3h-2.3zM1132.25 410.75h2.3v2.3h-2.3zM1137.25 410.75h2.3v2.3h-2.3zM1141.25 410.75h2.3v2.3h-2.3zM1146.25 410.75h2.3v2.3h-2.3zM1150.25 410.75h2.3v2.3h-2.3zM1155.25 410.75h2.3v2.3h-2.3zM1159.25 410.75h2.3v2.3h-2.3zM1164.25 410.75h2.3v2.3h-2.3zM1168.25 410.75h2.3v2.3h-2.3zM1173.25 410.75h2.3v2.3h-2.3zM1177.25 410.75h2.3v2.3h-2.3zM1182.25 410.75h2.3v2.3h-2.3zM1186.25 410.75h2.3v2.3h-2.3zM1191.25 410.75h2.3v2.3h-2.3zM1195.25 410.75h2.3v2.3h-2.3zM1200.25 410.75h2.3v2.3h-2.3zM1204.25 410.75h2.3v2.3h-2.3zM1209.25 410.75h2.3v2.3h-2.3zM1213.25 410.75h2.3v2.3h-2.3zM1218.25 410.75h2.3v2.3h-2.3zM1222.25 410.75h2.3v2.3h-2.3zM1227.25 410.75h2.3v2.3h-2.3zM1231.25 410.75h2.3v2.3h-2.3zM1236.25 410.75h2.3v2.3h-2.3zM1240.25 410.75h2.3v2.3h-2.3zM1245.25 410.75h2.3v2.3h-2.3zM1249.25 410.75h2.3v2.3h-2.3zM1254.25 410.75h2.3v2.3h-2.3zM1258.25 410.75h2.3v2.3h-2.3zM1263.25 410.75h2.3v2.3h-2.3zM1267.25 410.75h2.3v2.3h-2.3zM1272.25 410.75h2.3v2.3h-2.3zM1276.25 410.75h2.3v2.3h-2.3zM1281.25 410.75h2.3v2.3h-2.3zM1285.25 410.75h2.3v2.3h-2.3zM1290.25 410.75h2.3v2.3h-2.3zM1294.25 410.75h2.3v2.3h-2.3zM1299.25 410.75h2.3v2.3h-2.3zM1303.25 410.75h2.3v2.3h-2.3zM1308.25 410.75h2.3v2.3h-2.3zM1312.25 410.75h2.3v2.3h-2.3zM1317.25 410.75h2.3v2.3h-2.3zM1321.25 410.75h2.3v2.3h-2.3zM1326.25 410.75h2.3v2.3h-2.3zM1330.25 410.75h2.3v2.3h-2.3zM1335.25 410.75h2.3v2.3h-2.3zM1339.25 410.75h2.3v2.3h-2.3z"/><path fill="#80a0a8" d="M462.25 450.75h2.3v2.3h-2.3zM466.25 450.75h2.3v2.3h-2.3zM471.25 450.75h2.3v2.3h-2.3zM475.25 450.75h2.3v2.3h-2.3zM480.25 450.75h2.3v2.3h-2.3zM484.25 450.75h2.3v2.3h-2.3zM489.25 450.75h2.3v2.3h-2.3zM493.25 450.75h2.3v2.3h-2.3zM498.25 450.75h2.3v2.3h-2.3zM502.25 450.75h2.3v2.3h-2.3zM507.25 450.75h2.3v2.3h-2.3zM511.25 450.75h2.3v2.3h-2.3zM516.25 450.75h2.3v2.3h-2.3zM520.25 450.75h2.3v2.3h-2.3zM525.25 450.75h2.3v2.3h-2.3zM529.25 450.75h2.3v2.3h-2.3zM534.25 450.75h2.3v2.3h-2.3zM538.25 450.75h2.3v2.3h-2.3zM543.25 450.75h2.3v2.3h-2.3zM547.25 450.75h2.3v2.3h-2.3zM552.25 450.75h2.3v2.3h-2.3zM556.25 450.75h2.3v2.3h-2.3zM561.25 450.75h2.3v2.3h-2.3zM565.25 450.75h2.3v2.3h-2.3zM570.25 450.75h2.3v2.3h-2.3zM574.25 450.75h2.3v2.3h-2.3zM579.25 450.75h2.3v2.3h-2.3zM583.25 450.75h2.3v2.3h-2.3zM588.25 450.75h2.3v2.3h-2.3zM592.25 450.75h2.3v2.3h-2.3zM597.25 450.75h2.3v2.3h-2.3zM601.25 450.75h2.3v2.3h-2.3zM606.25 450.75h2.3v2.3h-2.3zM610.25 450.75h2.3v2.3h-2.3zM615.25 450.75h2.3v2.3h-2.3zM619.25 450.75h2.3v2.3h-2.3zM624.25 450.75h2.3v2.3h-2.3zM628.25 450.75h2.3v2.3h-2.3zM633.25 450.75h2.3v2.3h-2.3zM637.25 450.75h2.3v2.3h-2.3zM642.25 450.75h2.3v2.3h-2.3zM646.25 450.75h2.3v2.3h-2.3zM651.25 450.75h2.3v2.3h-2.3zM655.25 450.75h2.3v2.3h-2.3zM660.25 450.75h2.3v2.3h-2.3zM664.25 450.75h2.3v2.3h-2.3zM669.25 450.75h2.3v2.3h-2.3zM673.25 450.75h2.3v2.3h-2.3zM678.25 450.75h2.3v2.3h-2.3zM682.25 450.75h2.3v2.3h-2.3zM687.25 450.75h2.3v2.3h-2.3zM691.25 450.75h2.3v2.3h-2.3zM696.25 450.75h2.3v2.3h-2.3zM700.25 450.75h2.3v2.3h-2.3zM705.25 450.75h2.3v2.3h-2.3zM709.25 450.75h2.3v2.3h-2.3zM714.25 450.75h2.3v2.3h-2.3zM718.25 450.75h2.3v2.3h-2.3zM723.25 450.75h2.3v2.3h-2.3zM727.25 450.75h2.3v2.3h-2.3zM732.25 450.75h2.3v2.3h-2.3zM736.25 450.75h2.3v2.3h-2.3zM741.25 450.75h2.3v2.3h-2.3zM745.25 450.75h2.3v2.3h-2.3zM750.25 450.75h2.3v2.3h-2.3zM754.25 450.75h2.3v2.3h-2.3zM759.25 450.75h2.3v2.3h-2.3zM763.25 450.75h2.3v2.3h-2.3zM768.25 450.75h2.3v2.3h-2.3zM772.25 450.75h2.3v2.3h-2.3zM777.25 450.75h2.3v2.3h-2.3zM781.25 450.75h2.3v2.3h-2.3zM786.25 450.75h2.3v2.3h-2.3zM790.25 450.75h2.3v2.3h-2.3zM795.25 450.75h2.3v2.3h-2.3zM799.25 450.75h2.3v2.3h-2.3zM804.25 450.75h2.3v2.3h-2.3zM808.25 450.75h2.3v2.3h-2.3zM813.25 450.75h2.3v2.3h-2.3zM817.25 450.75h2.3v2.3h-2.3zM822.25 450.75h2.3v2.3h-2.3zM826.25 450.75h2.3v2.3h-2.3zM831.25 450.75h2.3v2.3h-2.3zM835.25 450.75h2.3v2.3h-2.3zM840.25 450.75h2.3v2.3h-2.3zM844.25 450.75h2.3v2.3h-2.3zM849.25 450.75h2.3v2.3h-2.3zM853.25 450.75h2.3v2.3h-2.3zM858.25 450.75h2.3v2.3h-2.3zM862.25 450.75h2.3v2.3h-2.3zM867.25 450.75h2.3v2.3h-2.3zM871.25 450.75h2.3v2.3h-2.3zM876.25 450.75h2.3v2.3h-2.3zM880.25 450.75h2.3v2.3h-2.3zM885.25 450.75h2.3v2.3h-2.3zM889.25 450.75h2.3v2.3h-2.3zM894.25 450.75h2.3v2.3h-2.3zM898.25 450.75h2.3v2.3h-2.3zM903.25 450.75h2.3v2.3h-2.3zM907.25 450.75h2.3v2.3h-2.3zM912.25 450.75h2.3v2.3h-2.3zM916.25 450.75h2.3v2.3h-2.3zM921.25 450.75h2.3v2.3h-2.3zM925.25 450.75h2.3v2.3h-2.3zM930.25 450.75h2.3v2.3h-2.3zM934.25 450.75h2.3v2.3h-2.3zM939.25 450.75h2.3v2.3h-2.3zM943.25 450.75h2.3v2.3h-2.3zM948.25 450.75h2.3v2.3h-2.3zM952.25 450.75h2.3v2.3h-2.3zM957.25 450.75h2.3v2.3h-2.3zM961.25 450.75h2.3v2.3h-2.3zM966.25 450.75h2.3v2.3h-2.3zM970.25 450.75h2.3v2.3h-2.3zM975.25 450.75h2.3v2.3h-2.3zM979.25 450.75h2.3v2.3h-2.3zM984.25 450.75h2.3v2.3h-2.3zM988.25 450.75h2.3v2.3h-2.3zM993.25 450.75h2.3v2.3h-2.3zM997.25 450.75h2.3v2.3h-2.3zM1002.25 450.75h2.3v2.3h-2.3zM1006.25 450.75h2.3v2.3h-2.3zM1011.25 450.75h2.3v2.3h-2.3zM1015.25 450.75h2.3v2.3h-2.3zM1020.25 450.75h2.3v2.3h-2.3zM1024.25 450.75h2.3v2.3h-2.3zM1029.25 450.75h2.3v2.3h-2.3zM1033.25 450.75h2.3v2.3h-2.3zM1038.25 450.75h2.3v2.3h-2.3zM1042.25 450.75h2.3v2.3h-2.3zM1047.25 450.75h2.3v2.3h-2.3zM1051.25 450.75h2.3v2.3h-2.3zM1056.25 450.75h2.3v2.3h-2.3zM1060.25 450.75h2.3v2.3h-2.3zM1065.25 450.75h2.3v2.3h-2.3zM1069.25 450.75h2.3v2.3h-2.3zM1074.25 450.75h2.3v2.3h-2.3zM1078.25 450.75h2.3v2.3h-2.3zM1083.25 450.75h2.3v2.3h-2.3zM1087.25 450.75h2.3v2.3h-2.3zM1092.25 450.75h2.3v2.3h-2.3zM1096.25 450.75h2.3v2.3h-2.3zM1101.25 450.75h2.3v2.3h-2.3zM1105.25 450.75h2.3v2.3h-2.3zM1110.25 450.75h2.3v2.3h-2.3zM1114.25 450.75h2.3v2.3h-2.3zM1119.25 450.75h2.3v2.3h-2.3zM1123.25 450.75h2.3v2.3h-2.3zM1128.25 450.75h2.3v2.3h-2.3zM1132.25 450.75h2.3v2.3h-2.3zM1137.25 450.75h2.3v2.3h-2.3zM1141.25 450.75h2.3v2.3h-2.3zM1146.25 450.75h2.3v2.3h-2.3zM1150.25 450.75h2.3v2.3h-2.3zM1155.25 450.75h2.3v2.3h-2.3zM1159.25 450.75h2.3v2.3h-2.3zM1164.25 450.75h2.3v2.3h-2.3zM1168.25 450.75h2.3v2.3h-2.3zM1173.25 450.75h2.3v2.3h-2.3zM1177.25 450.75h2.3v2.3h-2.3zM1182.25 450.75h2.3v2.3h-2.3zM1186.25 450.75h2.3v2.3h-2.3zM1191.25 450.75h2.3v2.3h-2.3zM1195.25 450.75h2.3v2.3h-2.3zM1200.25 450.75h2.3v2.3h-2.3zM1204.25 450.75h2.3v2.3h-2.3zM1209.25 450.75h2.3v2.3h-2.3zM1213.25 450.75h2.3v2.3h-2.3zM1218.25 450.75h2.3v2.3h-2.3zM1222.25 450.75h2.3v2.3h-2.3zM1227.25 450.75h2.3v2.3h-2.3zM1231.25 450.75h2.3v2.3h-2.3zM1236.25 450.75h2.3v2.3h-2.3zM1240.25 450.75h2.3v2.3h-2.3zM1245.25 450.75h2.3v2.3h-2.3zM1249.25 450.75h2.3v2.3h-2.3zM1254.25 450.75h2.3v2.3h-2.3zM1258.25 450.75h2.3v2.3h-2.3zM1263.25 450.75h2.3v2.3h-2.3zM1267.25 450.75h2.3v2.3h-2.3zM1272.25 450.75h2.3v2.3h-2.3zM1276.25 450.75h2.3v2.3h-2.3zM1281.25 450.75h2.3v2.3h-2.3zM1285.25 450.75h2.3v2.3h-2.3zM1290.25 450.75h2.3v2.3h-2.3zM1294.25 450.75h2.3v2.3h-2.3zM1299.25 450.75h2.3v2.3h-2.3zM1303.25 450.75h2.3v2.3h-2.3zM1308.25 450.75h2.3v2.3h-2.3zM1312.25 450.75h2.3v2.3h-2.3zM1317.25 450.75h2.3v2.3h-2.3zM1321.25 450.75h2.3v2.3h-2.3zM1326.25 450.75h2.3v2.3h-2.3zM1330.25 450.75h2.3v2.3h-2.3zM1335.25 450.75h2.3v2.3h-2.3zM1339.25 450.75h2.3v2.3h-2.3z"/></svg>
</body></html>
